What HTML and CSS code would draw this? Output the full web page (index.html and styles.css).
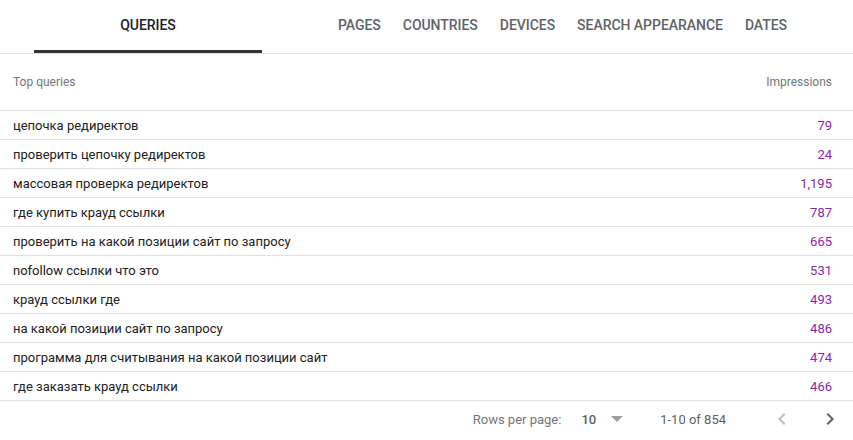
FILE: index.html
```html
<!DOCTYPE html>
<html lang="en">
<head>
<meta charset="UTF-8">
<meta name="viewport" content="width=device-width, initial-scale=1.0">
<title>Performance</title>
<link rel="stylesheet" href="styles.css">
</head>
<body>
  <div class="tabs">
    <a class="tab active" href="#">Queries</a>
    <div class="tab-spacer"></div>
    <a class="tab" href="#">Pages</a>
    <a class="tab" href="#">Countries</a>
    <a class="tab" href="#">Devices</a>
    <a class="tab" href="#">Search appearance</a>
    <a class="tab" href="#">Dates</a>
  </div>

  <table class="report">
    <tr class="head">
      <th class="q">Top queries</th>
      <th class="n">Impressions</th>
    </tr>
    <tr><td class="q">цепочка редиректов</td><td class="n">79</td></tr>
    <tr><td class="q">проверить цепочку редиректов</td><td class="n">24</td></tr>
    <tr><td class="q">массовая проверка редиректов</td><td class="n">1,195</td></tr>
    <tr><td class="q">где купить крауд ссылки</td><td class="n">787</td></tr>
    <tr><td class="q">проверить на какой позиции сайт по запросу</td><td class="n">665</td></tr>
    <tr><td class="q">nofollow ссылки что это</td><td class="n">531</td></tr>
    <tr><td class="q">крауд ссылки где</td><td class="n">493</td></tr>
    <tr><td class="q">на какой позиции сайт по запросу</td><td class="n">486</td></tr>
    <tr><td class="q">программа для считывания на какой позиции сайт</td><td class="n">474</td></tr>
    <tr><td class="q">где заказать крауд ссылки</td><td class="n">466</td></tr>
  </table>

  <div class="pager">
    <span class="label">Rows per page:</span>
    <span class="rows">10</span>
    <span class="caret"></span>
    <span class="range">1-10 of 854</span>
    <span class="nav prev">
      <svg width="24" height="24" viewBox="0 0 24 24"><path d="M15.41 7.41L14 6l-6 6 6 6 1.41-1.41L10.83 12z" fill="currentColor"/></svg>
    </span>
    <span class="nav next">
      <svg width="24" height="24" viewBox="0 0 24 24"><path d="M10 6L8.59 7.41 13.17 12l-4.58 4.59L10 18l6-6z" fill="currentColor"/></svg>
    </span>
  </div>
</body>
</html>
```

FILE: styles.css
```css
body {
  margin: 0;
  font-family: Roboto, "Liberation Sans", Arial, sans-serif;
  background-color: #fff;
  color: #212121;
}

.tabs {
  display: flex;
  height: 53px;
  border-bottom: 1px solid #e0e0e0;
  padding-left: 34px;
}

.tab {
  display: flex;
  align-items: center;
  justify-content: center;
  padding: 0 11px 3px;
  font-size: 14px;
  font-weight: 500;
  letter-spacing: -0.04px;
  text-transform: uppercase;
  color: #5f6368;
  text-decoration: none;
  box-sizing: border-box;
}

.tab.active {
  width: 228px;
  color: #202124;
  border-bottom: 3px solid #333;
  padding-bottom: 0;
}

.tab-spacer {
  width: 65px;
}

.report {
  width: 100%;
  border-collapse: collapse;
}

.report th, .report td {
  padding: 0 21px 0 13px;
  border-bottom: 1px solid #e0e0e0;
}

.report th {
  height: 56px;
  font-size: 12px;
  font-weight: 400;
  color: #757575;
}

.report td {
  height: 28px;
  font-size: 13px;
}

.report .q {
  text-align: left;
}

.report .n {
  text-align: right;
}

.report td.n {
  color: #8e24aa;
}

.pager {
  display: flex;
  align-items: center;
  justify-content: flex-end;
  height: 36px;
  font-size: 13px;
  color: #757575;
  padding-right: 11px;
}

.pager .rows {
  margin-left: 20px;
  color: #616161;
  font-weight: 500;
}

.pager .caret {
  width: 0;
  height: 0;
  border-left: 6px solid transparent;
  border-right: 6px solid transparent;
  border-top: 6px solid #9e9e9e;
  margin-left: 15px;
}

.pager .range {
  margin-left: 37px;
  color: #616161;
}

.pager .nav {
  display: flex;
  width: 24px;
  height: 24px;
}

.pager .prev {
  margin-left: 44px;
  color: #bdbdbd;
}

.pager .next {
  margin-left: 24px;
  color: #616161;
}
```
